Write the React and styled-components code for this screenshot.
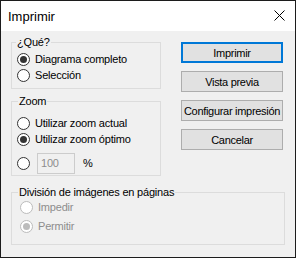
import React from 'react';
import styled, { createGlobalStyle } from 'styled-components';

const Global = createGlobalStyle`
  html, body { margin: 0; padding: 0; background: #ffffff; }
  body { font-family: "Liberation Sans", Arial, sans-serif; }
  * { box-sizing: border-box; }
`;

const Window = styled.div`
  width: 296px;
  height: 258px;
  border: 1px solid #1c1c1c;
  display: flex;
  flex-direction: column;
  background: #f0f0f0;
`;

const TitleBar = styled.div`
  height: 30px;
  flex: none;
  background: #ffffff;
  display: flex;
  align-items: center;
  justify-content: space-between;
  padding: 0 10px 0 7px;
`;

const Title = styled.span`
  font-size: 13px;
  line-height: 15px;
  color: #000000;
`;

const CloseIcon = styled.svg`
  width: 11px;
  height: 11px;
  margin-top: -2px;
`;

const Body = styled.div`
  flex: 1;
  padding: 4px 10px 0 10px;
  display: flex;
  flex-direction: column;
`;

const TopRow = styled.div`
  display: flex;
  gap: 20px;
`;

const LeftCol = styled.div`
  width: 150px;
  display: flex;
  flex-direction: column;
  gap: 5px;
`;

const ButtonCol = styled.div`
  width: 102px;
  padding-top: 7px;
  display: flex;
  flex-direction: column;
  gap: 8px;
`;

const Group = styled.fieldset`
  margin: ${p => p.$mt || 0}px 0 0 0;
  padding: 0;
  min-width: 0;
  border: 1px solid #dcdcdc;
`;

const Legend = styled.legend`
  font-size: 11px;
  line-height: 14px;
  padding: 0 1px;
  margin-left: ${p => p.$offset ?? 6}px;
  color: #000000;
  letter-spacing: -0.2px;
`;

const Content = styled.div`
  display: flex;
  flex-direction: column;
  gap: ${p => p.$gap || 0}px;
  padding: ${p => p.$pad};
`;

const RadioRow = styled.label`
  display: flex;
  align-items: center;
  gap: ${p => p.$gap ?? 5}px;
  height: ${p => p.$h || 16}px;
  margin-top: ${p => p.$mt || 0}px;
  font-size: 11px;
  letter-spacing: -0.2px;
  color: ${p => (p.$disabled ? '#8d8d8d' : '#000000')};
`;

const RadioCircle = styled.span`
  flex: none;
  width: 13px;
  height: 13px;
  border-radius: 50%;
  border: 1px solid ${p => (p.$disabled ? '#bcbcbc' : '#333333')};
  background: #ffffff;
  display: flex;
  align-items: center;
  justify-content: center;
  &::after {
    content: '';
    width: 7px;
    height: 7px;
    border-radius: 50%;
    background: ${p => (p.$disabled ? '#bcbcbc' : '#333333')};
    display: ${p => (p.$checked ? 'block' : 'none')};
  }
`;

const NumberBox = styled.span`
  width: 38px;
  height: 21px;
  border: 1px solid #cccccc;
  background: #f0f0f0;
  color: #8d8d8d;
  display: flex;
  align-items: center;
  padding-left: 3px;
  margin-left: 1px;
`;

const Unit = styled.span`
  margin-left: 2px;
  color: #000000;
`;

const Button = styled.div`
  height: 21px;
  background: #e1e1e1;
  border: ${p => (p.$default ? '2px solid #0078d7' : '1px solid #adadad')};
  display: flex;
  align-items: center;
  justify-content: center;
  font-size: 11px;
  letter-spacing: -0.3px;
  color: #000000;
  white-space: nowrap;
`;

function Radio({ checked, disabled, children }) {
  return (
    <RadioRow $disabled={disabled}>
      <RadioCircle $checked={checked} $disabled={disabled} />
      {children}
    </RadioRow>
  );
}

export default function App() {
  return (
    <>
      <Global />
      <Window>
        <TitleBar>
          <Title>Imprimir</Title>
          <CloseIcon viewBox="0 0 11 11">
            <path d="M0.5 0.5 L10.5 10.5 M10.5 0.5 L0.5 10.5" stroke="#000" strokeWidth="1" fill="none" />
          </CloseIcon>
        </TitleBar>
        <Body>
          <TopRow>
            <LeftCol>
              <Group>
                <Legend $offset={4}>¿Qué?</Legend>
                <Content $pad="2px 0 5px 5px">
                  <Radio checked>Diagrama completo</Radio>
                  <Radio>Selección</Radio>
                </Content>
              </Group>
              <Group>
                <Legend>Zoom</Legend>
                <Content $pad="7px 0 1px 5px">
                  <Radio>Utilizar zoom actual</Radio>
                  <Radio checked>Utilizar zoom óptimo</Radio>
                  <RadioRow $gap={6} $h={22} $mt={5}>
                    <RadioCircle />
                    <NumberBox>100</NumberBox>
                    <Unit>%</Unit>
                  </RadioRow>
                </Content>
              </Group>
            </LeftCol>
            <ButtonCol>
              <Button $default>Imprimir</Button>
              <Button>Vista previa</Button>
              <Button>Configurar impresión</Button>
              <Button>Cancelar</Button>
            </ButtonCol>
          </TopRow>
          <Group $mt={9}>
            <Legend>División de imágenes en páginas</Legend>
            <Content $pad="0 0 10px 8px" $gap={3}>
              <Radio disabled>Impedir</Radio>
              <Radio disabled checked>Permitir</Radio>
            </Content>
          </Group>
        </Body>
      </Window>
    </>
  );
}
